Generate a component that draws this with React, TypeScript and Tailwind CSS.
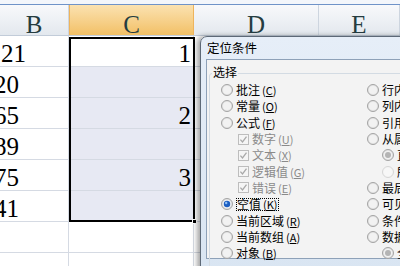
import React from 'react'

const cols = ['w-[69px]', 'w-[125px]', 'w-[125px]', 'flex-1']
const bVals = ['21', '20', '65', '89', '75', '41', '', '']
const cVals = ['1', '', '2', '', '3', '', '', '']

function Radio({ on, dim }: { on?: 'blue' | 'gray'; dim?: boolean }) {
  return (
    <svg width="12" height="12" viewBox="0 0 12 12" className="shrink-0">
      <circle cx="6" cy="6" r="5.5" fill={dim ? '#f4f4f4' : '#e4e4e4'} stroke={dim ? '#d6d6d6' : '#a3a3a3'} />
      <circle cx="6" cy="6" r="4" fill={dim ? '#f7f7f7' : '#f2f2f2'} />
      {on === 'blue' && (
        <>
          <circle cx="6" cy="6" r="3.2" fill="#1d5fc2" />
          <circle cx="5.2" cy="5" r="1.2" fill="#8fc0f5" />
        </>
      )}
      {on === 'gray' && <circle cx="6" cy="6" r="3" fill="#b4b4b4" />}
    </svg>
  )
}

function Check() {
  return (
    <svg width="11" height="11" viewBox="0 0 11 11" className="shrink-0">
      <rect x="0.5" y="0.5" width="10" height="10" fill="#f5f5f5" stroke="#bdbdbd" />
      <path d="M2.4 5.6l2.1 2.3 4-5.2" fill="none" stroke="#a9a9a9" strokeWidth="1.3" />
    </svg>
  )
}

function Label({ text, k, dim }: { text: string; k: string; dim?: boolean }) {
  return (
    <span className={`whitespace-nowrap text-[12px] leading-none ${dim ? 'text-[#8a8a8a]' : 'text-black'}`}>
      {text}
      <span className="ml-[2px] text-[11px]">
        (<span className="underline">{k}</span>)
      </span>
    </span>
  )
}

type Item = { kind: 'radio' | 'check' | 'sub'; text: string; k: string; on?: 'blue' | 'gray'; dim?: boolean; focus?: boolean }

const left: Item[] = [
  { kind: 'radio', text: '批注', k: 'C' },
  { kind: 'radio', text: '常量', k: 'O' },
  { kind: 'radio', text: '公式', k: 'F' },
  { kind: 'check', text: '数字', k: 'U', dim: true },
  { kind: 'check', text: '文本', k: 'X', dim: true },
  { kind: 'check', text: '逻辑值', k: 'G', dim: true },
  { kind: 'check', text: '错误', k: 'E', dim: true },
  { kind: 'radio', text: '空值', k: 'K', on: 'blue', focus: true },
  { kind: 'radio', text: '当前区域', k: 'R' },
  { kind: 'radio', text: '当前数组', k: 'A' },
  { kind: 'radio', text: '对象', k: 'B' },
]

const right: Item[] = [
  { kind: 'radio', text: '行内容差异单元格', k: 'W' },
  { kind: 'radio', text: '列内容差异单元格', k: 'M' },
  { kind: 'radio', text: '引用单元格', k: 'P' },
  { kind: 'radio', text: '从属单元格', k: 'D' },
  { kind: 'sub', text: '直属', k: 'I', on: 'gray' },
  { kind: 'sub', text: '所有级别', k: 'L', dim: true },
  { kind: 'radio', text: '最后一个单元格', k: 'S' },
  { kind: 'radio', text: '可见单元格', k: 'Y' },
  { kind: 'radio', text: '条件格式', k: 'T' },
  { kind: 'radio', text: '数据有效性', k: 'V' },
  { kind: 'sub', text: '全部', k: 'L', on: 'gray' },
]

function Option({ item }: { item: Item }) {
  const pad = item.kind === 'check' ? 'pl-[17px]' : item.kind === 'sub' ? 'pl-[15px]' : ''
  return (
    <div className={`flex h-[16.3px] items-center ${pad}`}>
      {item.kind === 'check' ? <Check /> : <Radio on={item.on} dim={item.dim} />}
      <span
        className={`ml-[3px] inline-flex h-[13px] items-center ${
          item.focus ? 'ml-[2px] border border-dotted border-black' : ''
        }`}
      >
        <Label text={item.text} k={item.k} dim={item.dim && item.kind === 'check'} />
      </span>
    </div>
  )
}

export default function App() {
  return (
    <div className="relative h-[266px] w-[400px] overflow-hidden bg-white font-['Liberation_Serif',serif]">
      <div className="h-[4px] bg-[#f3f6fb]" />
      <div className="h-px bg-[#6f93c8]" />

      {/* column headers */}
      <div className="flex h-[31px] border-b border-[#c2ccd9] text-[25px] leading-none text-[#253c40]">
        {['B', 'C', 'D', 'E'].map((h, i) => (
          <div
            key={h}
            className={`${cols[i]} flex justify-center pt-[7px] ${
              h === 'C'
                ? 'border-x border-[#eeb45c] bg-gradient-to-b from-[#fbe2b0] to-[#f2c065]'
                : 'border-r border-[#cdd5df] bg-gradient-to-b from-[#f8f9fb] to-[#e3e8ee]'
            }`}
          >
            {h}
          </div>
        ))}
      </div>

      {/* rows */}
      {bVals.map((b, r) => (
        <div key={r} className="flex h-[31px] text-[25px] leading-none text-black">
          <div className={`${cols[0]} flex items-end overflow-hidden border-b border-r border-[#d5dae3]`}>
            <span className={r === 0 ? 'ml-[1px]' : 'ml-[-6px]'}>{b}</span>
          </div>
          <div
            className={`${cols[1]} flex items-end justify-end border-b border-r border-[#d5dae3] pr-[2px] ${
              r > 0 && r < 6 ? 'bg-[#e7e9f3]' : ''
            }`}
          >
            {cVals[r]}
          </div>
          <div className={`${cols[2]} border-b border-r border-[#d5dae3]`} />
          <div className={`${cols[3]} border-b border-[#d5dae3]`} />
        </div>
      ))}

      {/* selection outline */}
      <div className="absolute left-[69px] top-[37px] h-[185px] w-[126px] border-2 border-black" />
      <div className="absolute left-[192px] top-[219px] h-[5px] w-[5px] border border-white bg-black" />

      {/* dialog */}
      <div className="absolute left-[200px] top-[36px] h-[240px] w-[240px] rounded-tl-[7px] border border-[#5d6977] bg-gradient-to-b from-[#e6eef8] to-[#d9e5f2] shadow-[-3px_0_5px_rgba(0,0,0,0.35)] font-['Noto_Sans_CJK_SC',sans-serif]">
        <div className="flex h-[22px] items-center pl-[6px] text-[12.5px] text-black">定位条件</div>
        <div className="ml-[5px] h-[200px] border border-[#8ea1b8] bg-[#f3f3f3] pl-[2px] pt-[13px]">
          <div className="relative h-[200px] rounded-[3px] border border-[#d3dbe3] pt-[8px] pl-[11px]">
            <span className="absolute left-[2px] top-[-8px] bg-[#f3f3f3] px-px text-[12px] leading-none text-black">选择</span>
            <div className="grid grid-cols-[146px_1fr]">
              <div className="flex flex-col">
                {left.map((it) => (
                  <Option key={it.text} item={it} />
                ))}
              </div>
              <div className="flex flex-col">
                {right.map((it) => (
                  <Option key={it.text} item={it} />
                ))}
              </div>
            </div>
          </div>
        </div>
      </div>
    </div>
  )
}
